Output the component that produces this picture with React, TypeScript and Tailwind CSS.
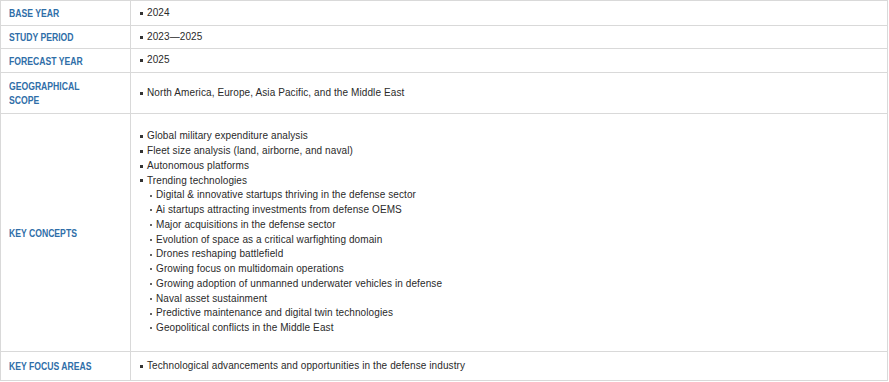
const rows: { label: string[]; h: string; items: string[]; subs?: string[] }[] = [
  { label: ["BASE YEAR"], h: "h-[24px]", items: ["2024"] },
  { label: ["STUDY PERIOD"], h: "h-[22px]", items: ["2023\u20142025"] },
  { label: ["FORECAST YEAR"], h: "h-[23px]", items: ["2025"] },
  {
    label: ["GEOGRAPHICAL", "SCOPE"],
    h: "h-[40px]",
    items: ["North America, Europe, Asia Pacific, and the Middle East"],
  },
  {
    label: ["KEY CONCEPTS"],
    h: "h-[237px]",
    items: [
      "Global military expenditure analysis",
      "Fleet size analysis (land, airborne, and naval)",
      "Autonomous platforms",
      "Trending technologies",
    ],
    subs: [
      "Digital & innovative startups thriving in the defense sector",
      "Ai startups attracting investments from defense OEMS",
      "Major acquisitions in the defense sector",
      "Evolution of space as a critical warfighting domain",
      "Drones reshaping battlefield",
      "Growing focus on multidomain operations",
      "Growing adoption of unmanned underwater vehicles in defense",
      "Naval asset sustainment",
      "Predictive maintenance and digital twin technologies",
      "Geopolitical conflicts in the Middle East",
    ],
  },
  {
    label: ["KEY FOCUS AREAS"],
    h: "h-[28px]",
    items: ["Technological advancements and opportunities in the defense industry"],
  },
];

function Bullet({ text }: { text: string }) {
  return (
    <li className="flex items-center">
      <span className="mr-[4px] inline-block h-[3px] w-[3px] shrink-0 bg-[#333]" />
      <span>{text}</span>
    </li>
  );
}

function SubBullet({ text }: { text: string }) {
  return (
    <li className="flex items-center pl-[10px]">
      <span className="mr-[4px] inline-block h-[2px] w-[2px] shrink-0 rounded-full bg-[#333]" />
      <span>{text}</span>
    </li>
  );
}

export default function App() {
  return (
    <div className="h-[382px] w-[889px] bg-white font-['Liberation_Sans',Arial,sans-serif]">
      <div className="w-[888px] border-x border-b border-t border-[#d9d9d9]">
        {rows.map((row, i) => (
          <div
            key={i}
            className={"grid grid-cols-[130px_1fr] " + (i > 0 ? "border-t border-[#d9d9d9]" : "")}
          >
            <div
              className={
                "flex flex-col justify-center border-r border-[#d9d9d9] pl-[8px] text-[11.5px] font-bold leading-[14px] text-[#2f6ea8] " +
                row.h
              }
            >
              {row.label.map((l) => (
                <span key={l} className="origin-left scale-x-[0.75] whitespace-nowrap">
                  {l}
                </span>
              ))}
            </div>
            <div className="flex flex-col justify-center pl-[9px] text-[10px] leading-[14.75px] tracking-[0.1px] text-[#2a2a2a]">
              <ul>
                {row.items.map((t) => (
                  <Bullet key={t} text={t} />
                ))}
                {row.subs?.map((t) => (
                  <SubBullet key={t} text={t} />
                ))}
              </ul>
            </div>
          </div>
        ))}
      </div>
    </div>
  );
}
